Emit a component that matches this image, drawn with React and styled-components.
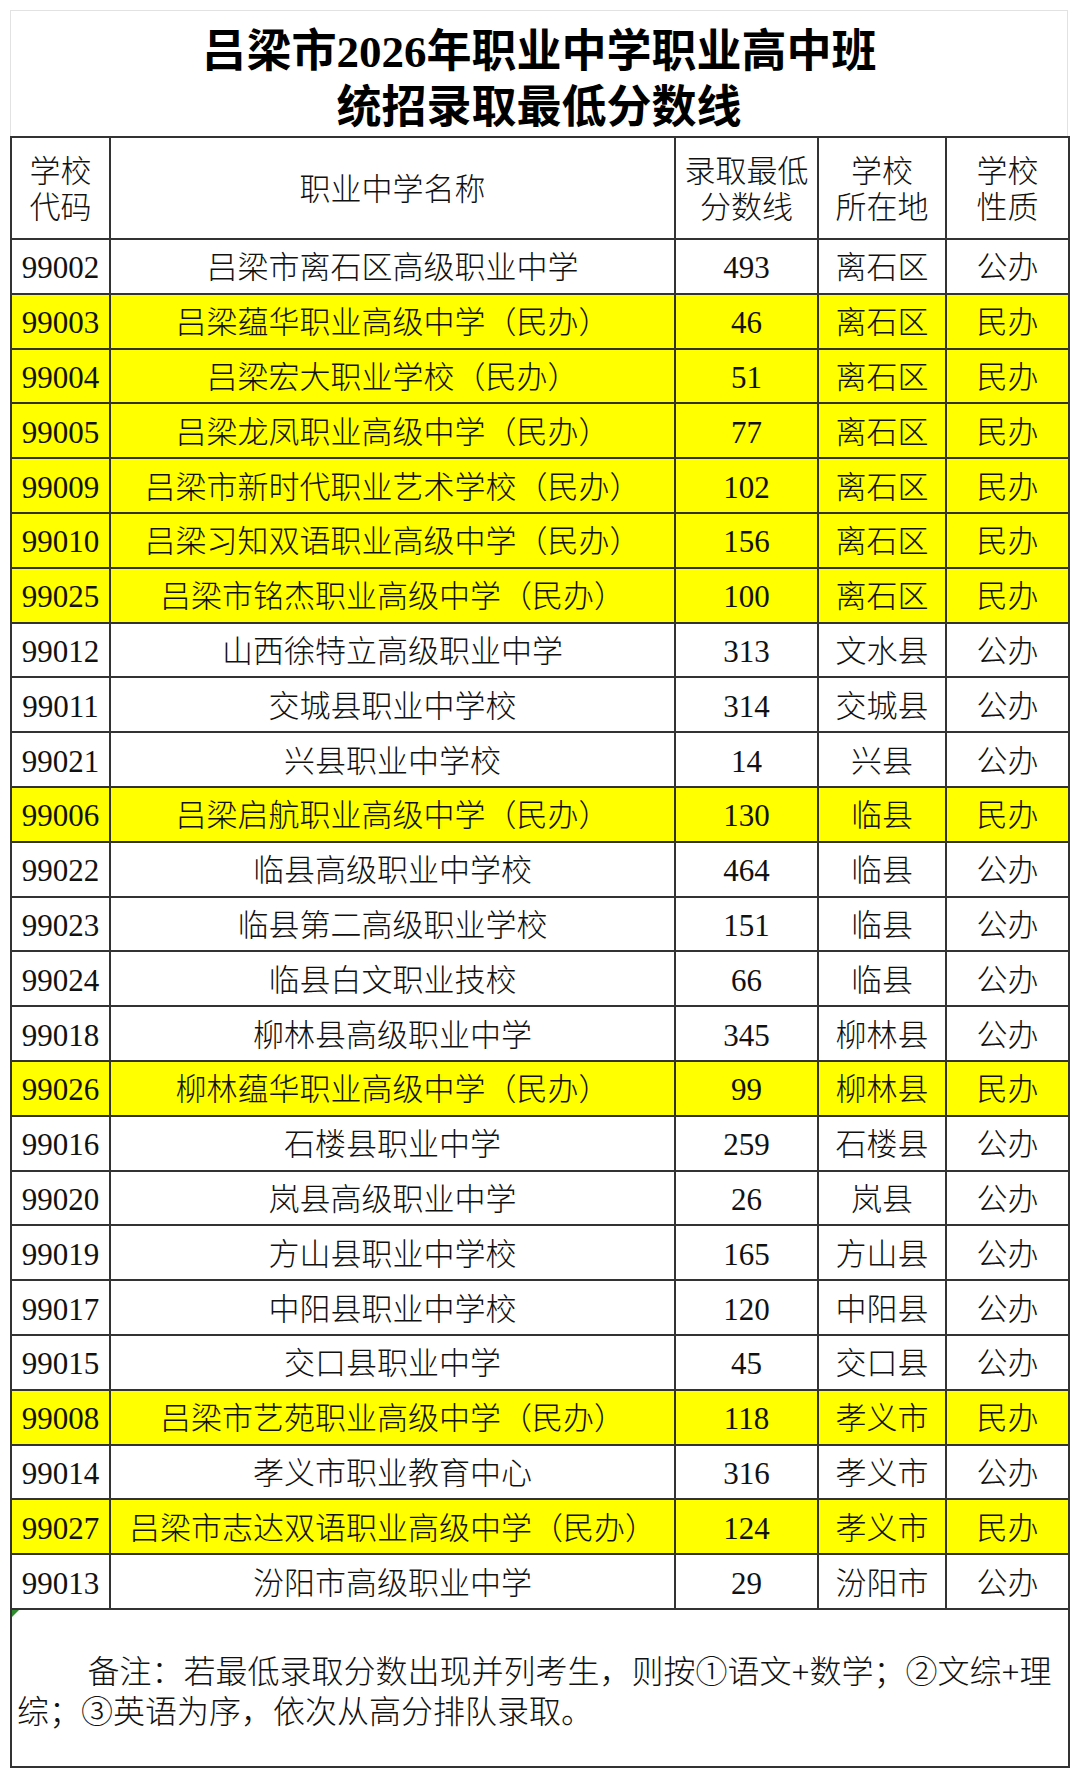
import React from 'react'
import styled, { createGlobalStyle } from 'styled-components'

const GlobalStyle = createGlobalStyle`
  html, body {
    margin: 0;
    padding: 0;
    background: #ffffff;
  }
  body {
    font-family: "Liberation Serif", "Noto Sans CJK SC", serif;
    color: #111111;
  }
`

const rows = [
  ['99002', '吕梁市离石区高级职业中学', '493', '离石区', '公办', false],
  ['99003', '吕梁蕴华职业高级中学（民办）', '46', '离石区', '民办', true],
  ['99004', '吕梁宏大职业学校（民办）', '51', '离石区', '民办', true],
  ['99005', '吕梁龙凤职业高级中学（民办）', '77', '离石区', '民办', true],
  ['99009', '吕梁市新时代职业艺术学校（民办）', '102', '离石区', '民办', true],
  ['99010', '吕梁习知双语职业高级中学（民办）', '156', '离石区', '民办', true],
  ['99025', '吕梁市铭杰职业高级中学（民办）', '100', '离石区', '民办', true],
  ['99012', '山西徐特立高级职业中学', '313', '文水县', '公办', false],
  ['99011', '交城县职业中学校', '314', '交城县', '公办', false],
  ['99021', '兴县职业中学校', '14', '兴县', '公办', false],
  ['99006', '吕梁启航职业高级中学（民办）', '130', '临县', '民办', true],
  ['99022', '临县高级职业中学校', '464', '临县', '公办', false],
  ['99023', '临县第二高级职业学校', '151', '临县', '公办', false],
  ['99024', '临县白文职业技校', '66', '临县', '公办', false],
  ['99018', '柳林县高级职业中学', '345', '柳林县', '公办', false],
  ['99026', '柳林蕴华职业高级中学（民办）', '99', '柳林县', '民办', true],
  ['99016', '石楼县职业中学', '259', '石楼县', '公办', false],
  ['99020', '岚县高级职业中学', '26', '岚县', '公办', false],
  ['99019', '方山县职业中学校', '165', '方山县', '公办', false],
  ['99017', '中阳县职业中学校', '120', '中阳县', '公办', false],
  ['99015', '交口县职业中学', '45', '交口县', '公办', false],
  ['99008', '吕梁市艺苑职业高级中学（民办）', '118', '孝义市', '民办', true],
  ['99014', '孝义市职业教育中心', '316', '孝义市', '公办', false],
  ['99027', '吕梁市志达双语职业高级中学（民办）', '124', '孝义市', '民办', true],
  ['99013', '汾阳市高级职业中学', '29', '汾阳市', '公办', false],
]

const columns = [99, 565, 143, 128, 123]

const Page = styled.div`
  padding: 10px 11px 0 10px;
  width: 1058px;
`

const Title = styled.div`
  height: 126px;
  border: 1px solid #e2e2e2;
  border-bottom: none;
  display: flex;
  flex-direction: column;
  align-items: center;
  justify-content: center;
  padding-top: 12px;
  box-sizing: border-box;
  font-family: "Liberation Serif", "Noto Sans CJK SC", serif;
  font-weight: 700;
  font-size: 45px;
  line-height: 56px;
  color: #000000;
`

const TitleLine = styled.div`
  white-space: nowrap;
`

const Table = styled.table`
  width: 1058px;
  border-collapse: collapse;
  table-layout: fixed;
  font-size: 31px;
  font-weight: 300;
`

const HeadCell = styled.th`
  height: 96px;
  padding: 4px 0 0;
  border: 2px solid #333333;
  font-weight: 300;
  line-height: 36px;
  text-align: center;
  vertical-align: middle;
  white-space: nowrap;
`

const Row = styled.tr`
  height: 54.8px;
  background: ${p => (p.$private ? '#ffff00' : '#ffffff')};
`

const Cell = styled.td`
  padding: 4px 0 0;
  border: 2px solid #333333;
  text-align: center;
  vertical-align: middle;
  line-height: 36px;
  white-space: nowrap;
`

const NoteCell = styled.td`
  position: relative;
  height: 148px;
  border: 2px solid #333333;
  padding: 8px 6px 0 5px;
  font-size: 32px;
  line-height: 40px;
  text-align: left;
  vertical-align: middle;
  font-weight: 300;
`

const NoteText = styled.p`
  margin: 0;
  text-indent: ${p => (p.$indent ? '2.2em' : '0')};
  white-space: nowrap;
`

const CommentMark = styled.span`
  position: absolute;
  left: 0;
  top: 0;
  width: 0;
  height: 0;
  border-top: 7px solid #2e8b2e;
  border-right: 7px solid transparent;
`

export default function App() {
  return (
    <>
      <GlobalStyle />
      <Page>
        <Title>
          <TitleLine>吕梁市2026年职业中学职业高中班</TitleLine>
          <TitleLine>统招录取最低分数线</TitleLine>
        </Title>
        <Table>
          <colgroup>
            {columns.map((w, i) => (
              <col key={i} style={{ width: w }} />
            ))}
          </colgroup>
          <thead>
            <tr>
              <HeadCell>学校<br />代码</HeadCell>
              <HeadCell>职业中学名称</HeadCell>
              <HeadCell>录取最低<br />分数线</HeadCell>
              <HeadCell>学校<br />所在地</HeadCell>
              <HeadCell>学校<br />性质</HeadCell>
            </tr>
          </thead>
          <tbody>
            {rows.map(([code, name, score, place, kind, priv]) => (
              <Row key={code} $private={priv}>
                <Cell>{code}</Cell>
                <Cell>{name}</Cell>
                <Cell>{score}</Cell>
                <Cell>{place}</Cell>
                <Cell>{kind}</Cell>
              </Row>
            ))}
            <tr>
              <NoteCell colSpan={5}>
                <CommentMark />
                <NoteText $indent>
                  备注：若最低录取分数出现并列考生，则按①语文+数学；②文综+理
                </NoteText>
                <NoteText>综；③英语为序，依次从高分排队录取。</NoteText>
              </NoteCell>
            </tr>
          </tbody>
        </Table>
      </Page>
    </>
  )
}
